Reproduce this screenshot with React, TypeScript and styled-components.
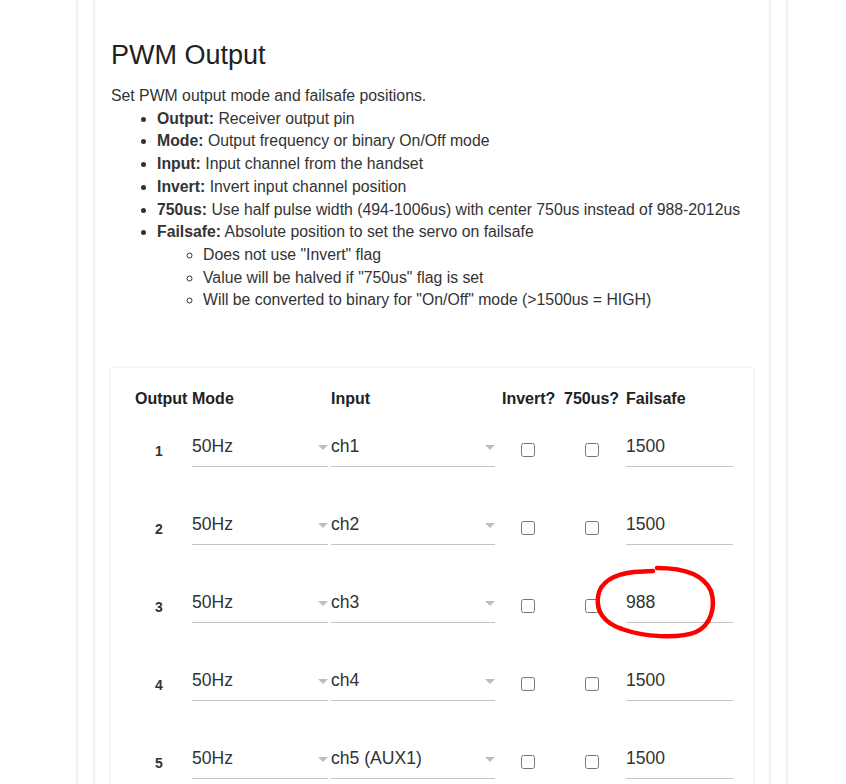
import React from "react";
import styled, { createGlobalStyle } from "styled-components";

const Global = createGlobalStyle`
  html, body { margin: 0; padding: 0; background: #fff; }
  body { font-family: "Liberation Sans", Arial, sans-serif; color: #333; overflow: hidden; }
`;

const Outer = styled.div`
  box-sizing: border-box;
  width: 712px;
  min-height: 784px;
  margin-left: 76px;
  padding: 0 15px;
  border-left: 2px solid #f1f1f1;
  border-right: 2px solid #f1f1f1;
`;

const Inner = styled.div`
  box-sizing: border-box;
  min-height: 784px;
  padding: 0 16px;
  border-left: 2px solid #f1f1f1;
  border-right: 2px solid #f1f1f1;
`;

const Title = styled.h2`
  margin: 0;
  padding-top: 39px;
  font-size: 27px;
  font-weight: 400;
  line-height: 33px;
  color: #222;
`;

const Intro = styled.p`
  margin: 13px 0 0;
  font-size: 15.8px;
  line-height: 22.7px;
`;

const List = styled.ul<{ $sub?: boolean }>`
  margin: 0;
  padding-left: 46px;
  list-style-type: ${(p) => (p.$sub ? "circle" : "disc")};
  font-size: 15.8px;
  line-height: 22.7px;
`;

const Card = styled.div`
  margin-top: 56px;
  width: 642px;
  box-sizing: border-box;
  padding: 21px 17px 30px 24px;
  background: #fff;
  box-shadow: 0 0 3px rgba(0, 0, 0, 0.14);
`;

const Grid = styled.div`
  display: grid;
  grid-template-columns: 57px 139px 171px 62px 62px 109px;
  row-gap: 46px;
  align-items: center;
`;

const HeadCell = styled.div`
  font-size: 16px;
  font-weight: 700;
  line-height: 20px;
  color: #222;
  white-space: nowrap;
  margin-bottom: -20px;
`;

const Num = styled.div`
  width: 48px;
  text-align: center;
  font-size: 14px;
  font-weight: 700;
  color: #333;
`;

const Field = styled.div<{ $w: number }>`
  position: relative;
  box-sizing: border-box;
  width: ${(p) => p.$w}px;
  display: flex;
  align-items: center;
  font-size: 17.6px;
  line-height: 22px;
  padding-bottom: 9px;
  border-bottom: 1px solid #c4c4c4;
  color: #333;
`;

const FieldText = styled.span`
  flex: 1;
  white-space: nowrap;
`;

const Arrow = styled.span`
  width: 0;
  height: 0;
  margin-top: 2px;
  border-left: 5px solid transparent;
  border-right: 5px solid transparent;
  border-top: 5px solid #bdbdbd;
`;

const CheckCell = styled.div<{ $offset: number }>`
  padding-left: ${(p) => p.$offset}px;
  display: flex;
  align-items: center;
  margin-top: -3px;
`;

const Check = styled.input`
  margin: 0;
  width: 14px;
  height: 14px;
`;

const Mark = styled.svg`
  position: absolute;
  left: -32px;
  top: -26px;
  overflow: visible;
  pointer-events: none;
`;

const rows = [
  { n: 1, mode: "50Hz", input: "ch1", fs: "1500" },
  { n: 2, mode: "50Hz", input: "ch2", fs: "1500" },
  { n: 3, mode: "50Hz", input: "ch3", fs: "988", mark: true },
  { n: 4, mode: "50Hz", input: "ch4", fs: "1500" },
  { n: 5, mode: "50Hz", input: "ch5 (AUX1)", fs: "1500" },
];

export default function App() {
  return (
    <>
      <Global />
      <Outer>
        <Inner>
          <Title>PWM Output</Title>
          <Intro>Set PWM output mode and failsafe positions.</Intro>
          <List>
            <li><b>Output:</b> Receiver output pin</li>
            <li><b>Mode:</b> Output frequency or binary On/Off mode</li>
            <li><b>Input:</b> Input channel from the handset</li>
            <li><b>Invert:</b> Invert input channel position</li>
            <li><b>750us:</b> Use half pulse width (494-1006us) with center 750us instead of 988-2012us</li>
            <li>
              <b>Failsafe:</b> Absolute position to set the servo on failsafe
              <List $sub>
                <li>Does not use "Invert" flag</li>
                <li>Value will be halved if "750us" flag is set</li>
                <li>Will be converted to binary for "On/Off" mode (&gt;1500us = HIGH)</li>
              </List>
            </li>
          </List>
          <Card>
            <Grid>
              <HeadCell>Output</HeadCell>
              <HeadCell>Mode</HeadCell>
              <HeadCell>Input</HeadCell>
              <HeadCell>Invert?</HeadCell>
              <HeadCell>750us?</HeadCell>
              <HeadCell>Failsafe</HeadCell>
              {rows.map((r) => (
                <React.Fragment key={r.n}>
                  <Num>{r.n}</Num>
                  <Field $w={136}>
                    <FieldText>{r.mode}</FieldText>
                    <Arrow />
                  </Field>
                  <Field $w={164}>
                    <FieldText>{r.input}</FieldText>
                    <Arrow />
                  </Field>
                  <CheckCell $offset={19}>
                    <Check type="checkbox" />
                  </CheckCell>
                  <CheckCell $offset={21}>
                    <Check type="checkbox" />
                  </CheckCell>
                  <Field $w={107}>
                    <FieldText>{r.fs}</FieldText>
                    {r.mark && (
                      <Mark width="124" height="76" viewBox="0 0 124 76">
                        <path
                          d="M63 3 C90 3 110 10 117 26 C122 42 117 60 102 67 C85 74 50 72 28 64 C10 58 2 46 4 32 C6 16 22 9 40 7 L59 6"
                          fill="none"
                          stroke="#f00"
                          strokeWidth="4.5"
                          strokeLinecap="round"
                          strokeLinejoin="round"
                        />
                      </Mark>
                    )}
                  </Field>
                </React.Fragment>
              ))}
            </Grid>
          </Card>
        </Inner>
      </Outer>
    </>
  );
}
